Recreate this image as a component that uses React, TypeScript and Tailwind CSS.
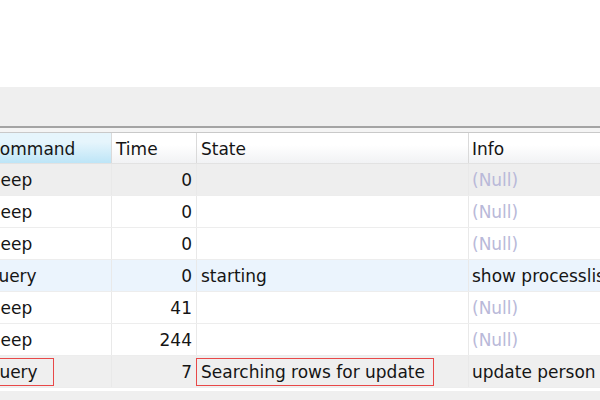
import React from "react"

const rows = [
  { cmd: "Sleep", time: "0", state: "", info: null, bg: "bg-[#eeeeee]" },
  { cmd: "Sleep", time: "0", state: "", info: null, bg: "bg-white" },
  { cmd: "Sleep", time: "0", state: "", info: null, bg: "bg-white" },
  { cmd: "Query", time: "0", state: "starting", info: "show processlist", bg: "bg-[#ebf4fd]" },
  { cmd: "Sleep", time: "41", state: "", info: null, bg: "bg-white" },
  { cmd: "Sleep", time: "244", state: "", info: null, bg: "bg-white" },
  { cmd: "Query", time: "7", state: "Searching rows for update", info: "update person set", bg: "bg-[#efefef]", marked: true },
]

const font = { fontFamily: '"DejaVu Sans", "Noto Sans", sans-serif' }

export default function App() {
  return (
    <div className="w-[600px] h-[400px] overflow-hidden bg-white text-[17px] text-[#151515]" style={font}>
      {/* top blank area */}
      <div className="h-[87px] bg-white" />
      {/* toolbar band */}
      <div className="h-[39px] bg-[#efefef]" />
      <div className="h-[2px] bg-[#a4a4a4]" />
      <div className="h-[4px] bg-[#f4f4f4]" />
      <div className="h-[1px] bg-[#c9c9c9]" />

      {/* grid scrolled a little to the right */}
      <div className="-ml-[19px]">
        <div className="flex h-[31px] pt-[0px] border-b border-[#e2e2e2] bg-gradient-to-b from-white from-40% to-[#f1f2f4]">
          <div className="w-[131px] shrink-0 pl-[7px] pt-[3px] flex items-center border-r border-[#dadada] bg-gradient-to-b from-[#e6f5fc] from-30% to-[#bde5f7]">
            Command
          </div>
          <div className="w-[85px] shrink-0 pl-[4px] pt-[3px] flex items-center border-r border-[#dadada]">Time</div>
          <div className="w-[272px] shrink-0 pl-[4px] pt-[3px] flex items-center border-r border-[#dadada]">State</div>
          <div className="flex-1 pl-[3px] pt-[3px] flex items-center">Info</div>
        </div>

        {rows.map((r, i) => (
          <div key={i} className={`flex h-[32px] border-b border-[#ededed] ${r.bg}`}>
            <div className="w-[131px] shrink-0 flex items-center border-r border-[#e9e9e9]">
              <span
                className={`h-[28px] flex items-center pl-[4px] pt-[3px] ${
                  r.marked ? "w-[73px] border border-[#e84848]" : ""
                }`}
              >
                {r.cmd}
              </span>
            </div>
            <div className="w-[85px] shrink-0 flex items-center justify-end pr-[4px] pt-[3px] border-r border-[#e9e9e9]">
              {r.time}
            </div>
            <div className="w-[272px] shrink-0 flex items-center border-r border-[#e9e9e9]">
              <span
                className={`h-[28px] flex items-center pl-[4px] pt-[3px] whitespace-nowrap ${
                  r.marked ? "w-[238px] border border-[#e84848] -ml-[1px]" : ""
                }`}
              >
                {r.state}
              </span>
            </div>
            <div className="flex-1 pl-[3px] pt-[3px] flex items-center whitespace-nowrap">
              {r.info === null ? <span className="text-[#b9b9d9]">(Null)</span> : r.info}
            </div>
          </div>
        ))}
      </div>
      <div className="h-[3px] bg-white" />
      <div className="h-[20px] bg-[#efefef]" />
    </div>
  )
}
